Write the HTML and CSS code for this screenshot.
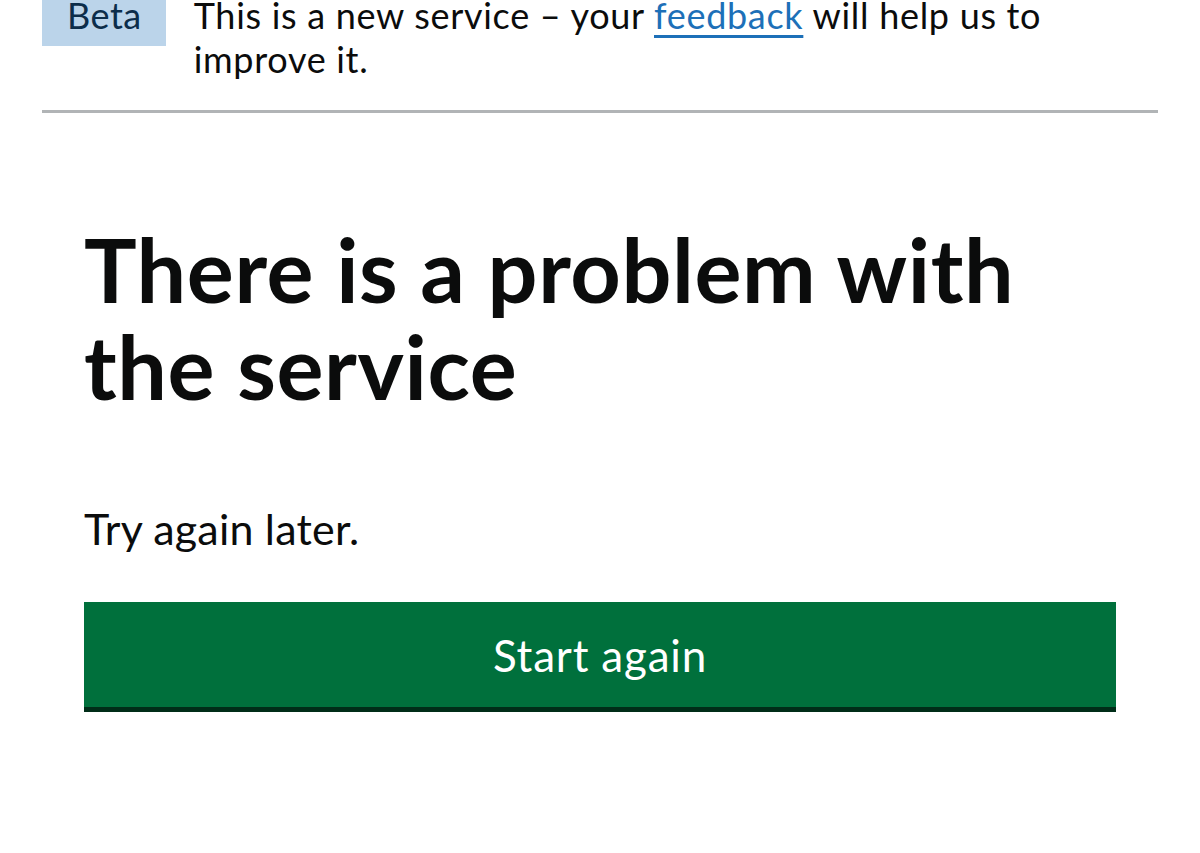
FILE: index.html
```html
<!DOCTYPE html>
<html lang="en">
<head>
<meta charset="utf-8">
<title>There is a problem with the service</title>
<link rel="stylesheet" href="styles.css">
</head>
<body>
<div class="page">
  <div class="phase-banner">
    <strong class="tag">Beta</strong>
    <p class="phase-text">This is a new service – your <a class="link" href="#">feedback</a> will help us to improve it.</p>
  </div>
  <main class="main">
    <h1 class="heading">There is a problem with the service</h1>
    <p class="body">Try again later.</p>
    <a class="button" href="#">Start again</a>
  </main>
</div>
</body>
</html>
```

FILE: styles.css
```css
html, body {
  margin: 0;
  padding: 0;
  background: #ffffff;
}

body {
  font-family: "Lato", "Liberation Sans", sans-serif;
  color: #0b0c0c;
}

.page {
  margin-top: -16px;
  padding: 0 42px;
}

.phase-banner {
  display: flex;
  align-items: baseline;
  gap: 28px;
  padding-bottom: 29px;
  border-bottom: 3px solid #b1b4b6;
}

.tag {
  flex: none;
  background: #bbd4ea;
  color: #0c2d4a;
  font-weight: 400;
  font-size: 36px;
  line-height: 44px;
  letter-spacing: 0.5px;
  padding: 9px 24px 9px 25px;
}

.phase-text {
  margin: 0;
  font-size: 36px;
  line-height: 44px;
  letter-spacing: 0.7px;
  max-width: 900px;
}

.link {
  color: #1d70b8;
  text-decoration: underline;
  text-decoration-thickness: 3px;
  text-underline-offset: 6px;
}

.main {
  padding: 0 42px;
}

.heading {
  margin: 108px 0 0;
  font-size: 88px;
  line-height: 97px;
  letter-spacing: 0.6px;
  font-weight: 700;
  max-width: 980px;
}

.body {
  margin: 87px 0 0;
  font-size: 43px;
  line-height: 54px;
  letter-spacing: 0.2px;
}

.button {
  display: block;
  margin-top: 46px;
  padding: 26px 0 25px;
  background: #00703c;
  border-bottom: 5px solid #002d18;
  color: #ffffff;
  text-align: center;
  text-decoration: none;
  font-size: 44px;
  line-height: 54px;
  letter-spacing: 0.8px;
}
```
